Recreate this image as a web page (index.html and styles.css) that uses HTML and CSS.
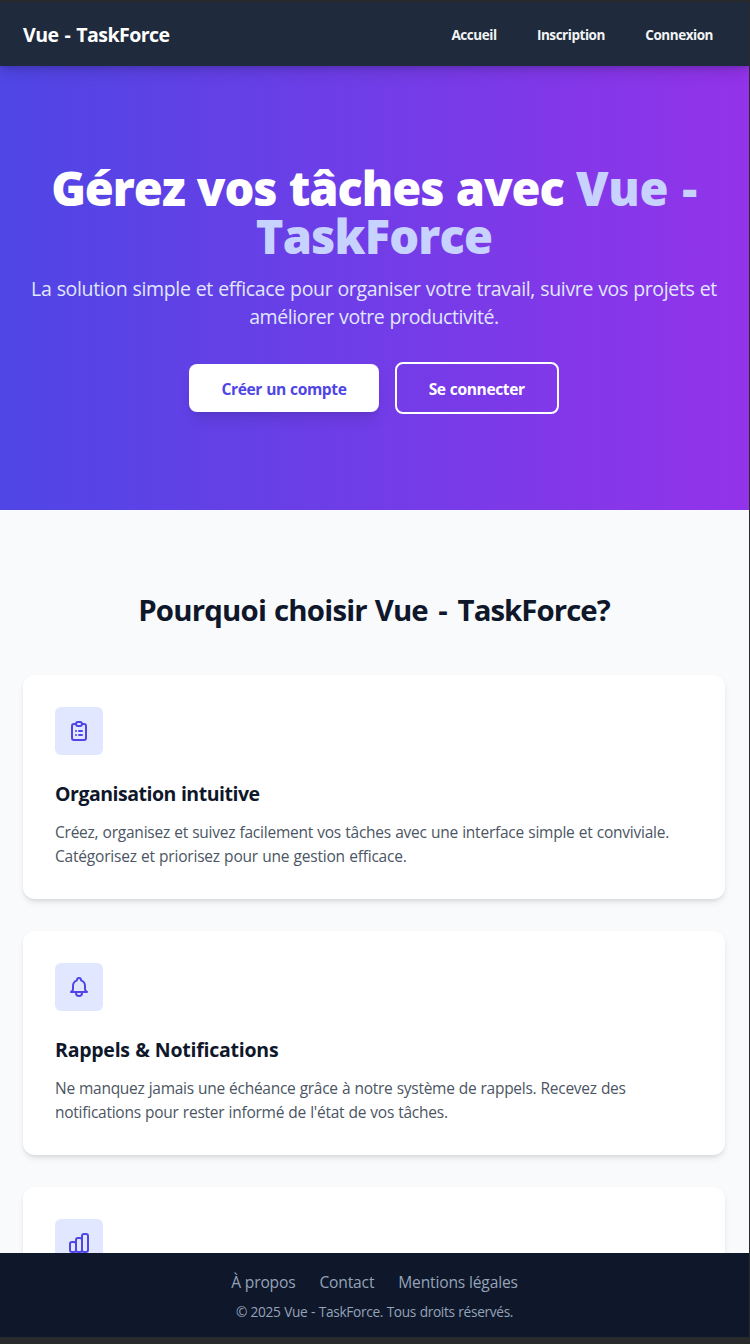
FILE: index.html
```html
<!DOCTYPE html>
<html lang="fr">
<head>
<meta charset="utf-8">
<title>Vue - TaskForce</title>
<link rel="stylesheet" href="styles.css">
</head>
<body>
<div class="page">
  <header class="header">
    <a class="logo">Vue - TaskForce</a>
    <nav class="nav"><a>Accueil</a><a>Inscription</a><a>Connexion</a></nav>
  </header>
  <main class="main">
    <section class="hero">
      <h1 class="hero-title"><span class="title-start">Gérez vos tâches avec <em>Vue -</em></span><em class="title-end">TaskForce</em></h1>
      <p class="hero-text"><span class="lead-1">La solution simple et efficace pour organiser votre travail, suivre vos projets et</span><span class="lead-2">améliorer votre productivité.</span></p>
      <div class="actions"><a class="btn btn-primary">Créer un compte</a><a class="btn btn-outline">Se connecter</a></div>
    </section>
    <section class="features">
      <h2 class="features-title">Pourquoi choisir <span class="brand">Vue - TaskForce?</span></h2>
      <div class="cards">
        <article class="card">
          <div class="icon"><svg viewBox="0 0 24 24"><path d="M9 5H7a2 2 0 00-2 2v12a2 2 0 002 2h10a2 2 0 002-2V7a2 2 0 00-2-2h-2M9 5a2 2 0 002 2h2a2 2 0 002-2M9 5a2 2 0 012-2h2a2 2 0 012 2m-3 7h3m-3 4h3m-6-4h.01M9 16h.01"/></svg></div>
          <h3 class="card-title t1">Organisation intuitive</h3>
          <p class="card-text"><span class="c1">Créez, organisez et suivez facilement vos tâches avec une interface simple et conviviale.</span><br><span class="c2">Catégorisez et priorisez pour une gestion efficace.</span></p>
        </article>
        <article class="card">
          <div class="icon"><svg viewBox="0 0 24 24"><path d="M15 17h5l-1.405-1.405A2.032 2.032 0 0118 14.158V11a6.002 6.002 0 00-4-5.659V5a2 2 0 10-4 0v.341C7.67 6.165 6 8.388 6 11v3.159c0 .538-.214 1.055-.595 1.436L4 17h5m6 0v1a3 3 0 11-6 0v-1m6 0H9"/></svg></div>
          <h3 class="card-title t2">Rappels &amp; Notifications</h3>
          <p class="card-text"><span class="c3">Ne manquez jamais une échéance grâce à notre système de rappels. Recevez des</span><br><span class="c4">notifications pour rester informé de l'état de vos tâches.</span></p>
        </article>
        <article class="card">
          <div class="icon"><svg viewBox="0 0 24 24"><path d="M9 19v-6a2 2 0 00-2-2H5a2 2 0 00-2 2v6a2 2 0 002 2h2a2 2 0 002-2zm0 0V9a2 2 0 012-2h2a2 2 0 012 2v10m-6 0a2 2 0 002 2h2a2 2 0 002-2m0 0V5a2 2 0 012-2h2a2 2 0 012 2v14a2 2 0 01-2 2h-2a2 2 0 01-2-2z"/></svg></div>
        </article>
      </div>
    </section>
  </main>
  <footer class="footer">
    <nav class="links"><a>À propos</a><a>Contact</a><a>Mentions légales</a></nav>
    <p class="copyright">© 2025 Vue - TaskForce. Tous droits réservés.</p>
  </footer>
</div>
</body>
</html>
```
FILE: styles.css
```css
* { box-sizing: border-box; margin: 0; padding: 0; }
html, body { height: 1344px; overflow: hidden; }
body { font-family: "Open Sans", "Noto Sans", sans-serif; background: #282a2c; white-space: nowrap; }
.page { display: flex; flex-direction: column; height: 1344px; width: 749px; padding: 2px 0 7px; overflow: hidden; }
.header { position: relative; z-index: 1; height: 64px; flex: none; display: flex; align-items: center; justify-content: space-between; padding: 0 24px 0 23px; background: #1f2a3c; color: #fff; box-shadow: 0 4px 6px -1px rgba(0,0,0,.1), 0 10px 15px -3px rgba(0,0,0,.1), 0 2px 4px -2px rgba(0,0,0,.1); }
.logo { font-size: 19.6px; font-weight: 700; letter-spacing: -.57px; word-spacing: 1.5px; }
.nav { display: flex; gap: 16.4px; font-size: 13.5px; font-weight: 700; letter-spacing: -.46px; color: #f3f4f6; }
.nav a { padding: 10px 12px 8px; }
.main { flex: 1; min-height: 0; overflow: hidden; background: #f9fafc; }
.hero { width: 750px; margin-left: -1px; height: 444px; padding: 98px 24px 96px; text-align: center; color: #fff; background: linear-gradient(to right, #4f46e5, #9333ea); }
.hero-title { font-size: 47px; line-height: 48px; font-weight: 800; }
.hero-title em { font-style: normal; color: #c7d2fe; }
.hero-text { margin-top: 15px; font-size: 19.5px; line-height: 28px; color: #e0e7ff; }
.hero-title, .hero-text { display: flex; flex-direction: column; align-items: center; }
.title-start { letter-spacing: -1.05px; word-spacing: 1px; }
.title-start em { letter-spacing: -.3px; word-spacing: 2px; }
.title-end { letter-spacing: -.83px; }
.lead-1 { letter-spacing: -.348px; word-spacing: .5px; }
.lead-2 { letter-spacing: -.4px; word-spacing: .5px; }
.actions { margin-top: 31px; display: flex; gap: 16px; justify-content: center; align-items: center; }
.btn { display: flex; align-items: center; justify-content: center; height: 48px; padding-top: 2px; border-radius: 8px; font-size: 15.6px; font-weight: 700; letter-spacing: -.4px; word-spacing: .5px; }
.btn-primary { width: 189.4px; background: #fff; color: #4f46e5; box-shadow: 0 10px 15px -3px rgba(0,0,0,.1), 0 4px 6px -4px rgba(0,0,0,.1); }
.btn-outline { width: 164px; height: 52px; border: 2px solid #fff; color: #fff; }
.features { padding: 82px 24px 0 23px; }
.features-title { font-size: 29.4px; line-height: 36px; font-weight: 700; letter-spacing: -.8px; word-spacing: 1px; text-align: center; color: #0f172a; margin-bottom: 47px; }
.brand { letter-spacing: -.95px; word-spacing: 4px; }
.cards { display: flex; flex-direction: column; gap: 32px; }
.card { height: 224px; padding: 32px; border-radius: 12px; background: #fff; box-shadow: 0 4px 6px -1px rgba(0,0,0,.1), 0 2px 4px -2px rgba(0,0,0,.1); }
.icon { width: 48px; height: 48px; border-radius: 6px; background: #e0e7ff; display: flex; align-items: center; justify-content: center; margin-bottom: 25px; }
.icon svg { width: 24px; height: 24px; fill: none; stroke: #4f46e5; stroke-width: 2; stroke-linecap: round; stroke-linejoin: round; }
.card-title { font-size: 19.5px; line-height: 28px; font-weight: 700; word-spacing: .5px; color: #0f172a; margin-bottom: 12px; }
.t1 { letter-spacing: -.49px; }
.t2 { letter-spacing: -.24px; }
.card-text { font-size: 15.5px; line-height: 24px; word-spacing: .4px; color: #4b5563; }
.c1 { letter-spacing: -.23px; }
.c2 { letter-spacing: -.2px; }
.c3 { letter-spacing: -.27px; }
.c4 { letter-spacing: -.25px; }
.footer { height: 84px; flex: none; padding: 17px 0 15px; background: #0f172a; color: #94a3b8; text-align: center; }
.links { display: flex; gap: 24px; justify-content: center; font-size: 15.6px; line-height: 24px; letter-spacing: -.17px; }
.copyright { margin-top: 8px; font-size: 13.7px; line-height: 20px; letter-spacing: -.33px; word-spacing: .4px; }
```
